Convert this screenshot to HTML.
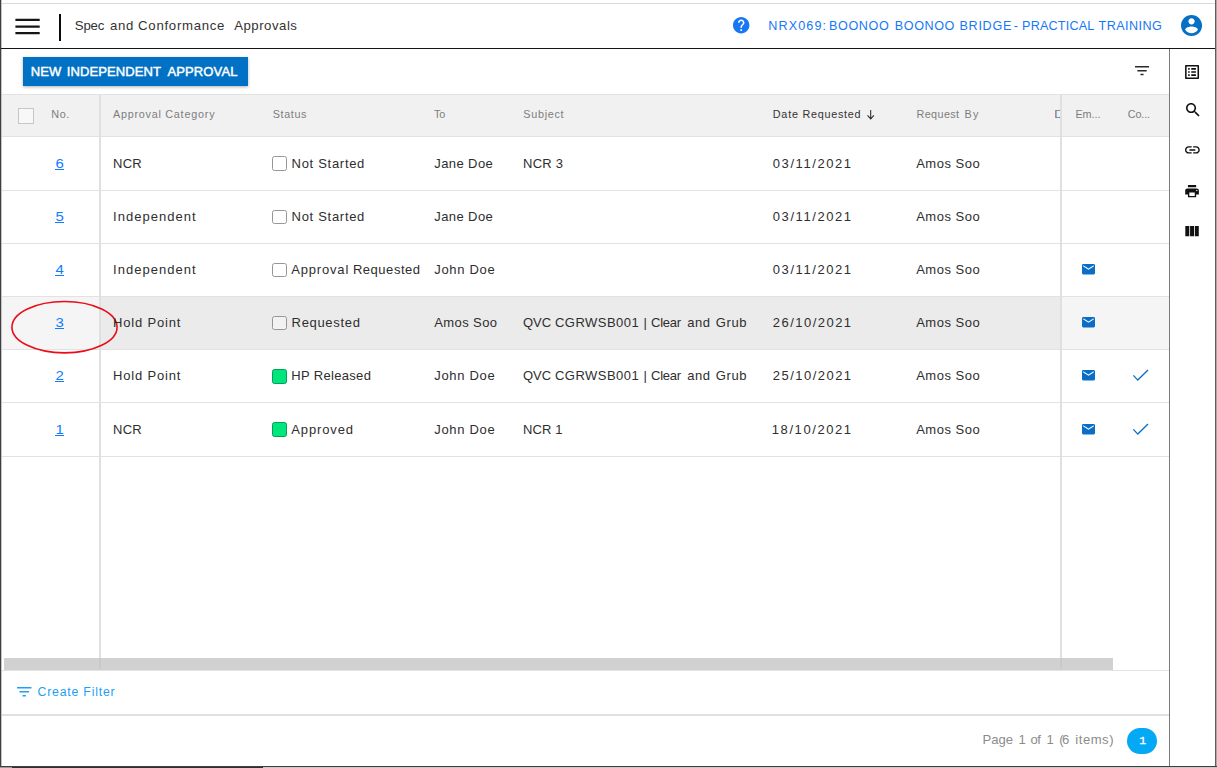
<!DOCTYPE html>
<html lang="en">
<head>
<meta charset="utf-8">
<title>Spec and Conformance - Approvals</title>
<style>
html,body{margin:0;padding:0}
body{width:1217px;height:768px;overflow:hidden;position:relative;background:#fff;font-family:"Liberation Sans",sans-serif}
.a{position:absolute}
.t{position:absolute;white-space:pre;line-height:1}
a.t{text-decoration:none}
.hl{position:absolute;height:1px;background:#e2e2e2}
.cb{position:absolute;left:272px;width:13px;height:13px;border:1px solid #969696;border-radius:2.5px;background:rgba(255,255,255,.35)}
.cb.g{background:#00e67d;border-color:#04a05a}
.ul{position:absolute;height:1px;width:9px;left:55px;background:#0f7bff}
a.t{transform:scaleX(1.15);transform-origin:50% 50%}
svg{position:absolute;overflow:visible}
</style>
</head>
<body>
<!-- window frame -->
<div class="a" style="left:0;top:0;width:1px;height:768px;background:#3f3f3f"></div>
<div class="a" style="left:1px;top:0;width:1px;height:766px;background:#c4c4c4"></div>
<div class="a" style="left:2px;top:3px;width:1213px;height:1px;background:#dadada"></div>
<div class="a" style="left:1215px;top:0;width:1px;height:767px;background:#5e5e5e"></div>
<div class="a" style="left:1216px;top:0;width:1px;height:768px;background:#a9a9a9"></div>
<div class="a" style="left:0;top:766px;width:1217px;height:1px;background:#404040"></div>
<div class="a" style="left:0;top:767px;width:12px;height:1px;background:#9a9a9a"></div>
<div class="a" style="left:12px;top:767px;width:251px;height:1px;background:#303030"></div>
<div class="a" style="left:263px;top:767px;width:954px;height:1px;background:#c9c9c9"></div>

<!-- top nav -->
<div class="a" style="left:1px;top:48px;width:1214px;height:1px;background:#151515"></div>
<svg style="left:0;top:0" width="60" height="48" viewBox="0 0 60 48"><path fill="#161616" d="M15.4 18.75h24.3v2.25H15.4zM15.4 25.5h24.3v2.25H15.4zM15.4 32.1h24.3v2.25H15.4z"/></svg>
<div class="a" style="left:59px;top:14px;width:2px;height:26.5px;background:#0a0a0a"></div>
<!-- help -->
<svg style="left:732.9px;top:17.3px" width="16.4" height="16.4" viewBox="2 2 20 20"><path fill="#1877f2" d="M12 2C6.48 2 2 6.48 2 12s4.48 10 10 10 10-4.48 10-10S17.52 2 12 2zm1 17h-2v-2h2v2zm2.07-7.75l-.9.92C13.45 12.9 13 13.5 13 15h-2v-.5c0-1.1.45-2.1 1.17-2.83l1.24-1.26c.37-.36.59-.86.59-1.41 0-1.1-.9-2-2-2s-2 .9-2 2H8c0-2.21 1.79-4 4-4s4 1.79 4 4c0 .88-.36 1.68-.93 2.25z"/></svg>
<!-- avatar -->
<svg style="left:1181px;top:14.85px" width="21.1" height="21.1" viewBox="2 2 20 20"><path fill="#0670c4" d="M12 2C6.48 2 2 6.48 2 12s4.48 10 10 10 10-4.48 10-10S17.52 2 12 2zm0 3c1.66 0 3 1.34 3 3s-1.34 3-3 3-3-1.34-3-3 1.34-3 3-3zm0 14.2c-2.5 0-4.71-1.28-6-3.22.03-1.99 4-3.08 6-3.08 1.99 0 5.97 1.09 6 3.08-1.29 1.94-3.5 3.22-6 3.22z"/></svg>

<!-- toolbar -->
<div class="a" style="left:23px;top:57px;width:225px;height:29px;background:#0071c5;box-shadow:0 1px 3px rgba(0,0,0,.3)"></div>
<svg style="left:1135.2px;top:66.2px" width="14" height="9.33" viewBox="3 6 18 12"><path fill="#2a2a2a" d="M10 18h4v-2h-4v2zM3 6v2h18V6H3zm3 7h12v-2H6v2z"/></svg>

<!-- sidebar -->
<div class="a" style="left:1169px;top:49px;width:1px;height:717px;background:#7a7a7a"></div>
<svg style="left:1185.1px;top:65px" width="14.1" height="14" viewBox="3 3 18 18"><path fill="#111" d="M19 5v14H5V5h14m1.1-2H3.9c-.5 0-.9.4-.9.9v16.2c0 .4.4.9.9.9h16.2c.4 0 .9-.5.9-.9V3.9c0-.5-.5-.9-.9-.9zM11 7h6v2h-6V7zm0 4h6v2h-6v-2zm0 4h6v2h-6zM7 7h2v2H7zm0 4h2v2H7zm0 4h2v2H7z"/></svg>
<svg style="left:1185.6px;top:103.2px" width="13.6" height="13.6" viewBox="3 3 17.49 17.49"><path fill="#111" d="M15.5 14h-.79l-.28-.27C15.41 12.59 16 11.11 16 9.5 16 5.91 13.09 3 9.5 3S3 5.91 3 9.5 5.91 16 9.5 16c1.61 0 3.09-.59 4.23-1.57l.27.28v.79l5 4.99L20.49 19l-4.99-5zm-6 0C7.01 14 5 11.99 5 9.5S7.01 5 9.5 5 14 7.01 14 9.5 11.99 14 9.5 14z"/></svg>
<svg style="left:1185px;top:145.7px" width="14.8" height="7.8" viewBox="2 7 20 10"><path fill="#111" d="M3.9 12c0-1.71 1.39-3.1 3.1-3.1h4V7H7c-2.76 0-5 2.240-5 5s2.240 5 5 5h4v-1.900H7c-1.710 0-3.100-1.390-3.100-3.100zM8 13h8v-2H8v2zm9-6h-4v1.900h4c1.710 0 3.100 1.390 3.100 3.100s-1.390 3.100-3.100 3.100h-4V17h4c2.760 0 5-2.240 5-5s-2.240-5-5-5z"/></svg>
<svg style="left:1185.3px;top:184.7px" width="14.1" height="12.3" viewBox="2 3 20 18"><path fill="#111" d="M19 8H5c-1.660 0-3 1.340-3 3v6h4v4h12v-4h4v-6c0-1.660-1.340-3-3-3zm-3 11H8v-5h8v5zm3-7c-.55 0-1-.45-1-1s.45-1 1-1 1 .45 1 1-.45 1-1 1zm-1-9H6v3.3h12V3z"/></svg>
<svg style="left:1185.3px;top:225.8px" width="14.1" height="10.3" viewBox="4 5 17 13"><path fill="#111" d="M10 18h5V5h-5v13zm-6 0h5V5H4v13zM16 5v13h5V5h-5z"/></svg>

<!-- grid header -->
<div class="a" style="left:2px;top:95px;width:1167px;height:41.5px;background:#f1f1f1"></div>
<div class="a" style="left:18px;top:108px;width:14px;height:14px;border:1px solid #c6c6c6;background:#f8f8f8"></div>
<!-- highlighted row -->
<div class="a" style="left:2px;top:296.6px;width:97px;height:52.8px;background:#f5f5f5"></div>
<div class="a" style="left:101px;top:296.6px;width:959px;height:52.8px;background:#ebebeb"></div>
<div class="a" style="left:1062px;top:296.6px;width:107px;height:52.8px;background:#f5f5f5"></div>
<!-- row lines -->
<div class="hl" style="left:2px;top:94px;width:1167px"></div>
<div class="hl" style="left:2px;top:136px;width:1167px"></div>
<div class="hl" style="left:2px;top:190px;width:1167px"></div>
<div class="hl" style="left:2px;top:243px;width:1167px"></div>
<div class="hl" style="left:2px;top:296px;width:1167px"></div>
<div class="hl" style="left:2px;top:349px;width:1167px"></div>
<div class="hl" style="left:2px;top:402px;width:1167px"></div>
<div class="hl" style="left:2px;top:456px;width:1167px"></div>
<!-- scrollbar -->
<div class="a" style="left:4px;top:658px;width:1109px;height:12px;background:#d1d1d1"></div>
<div class="hl" style="left:2px;top:670px;width:1167px;background:#e2e2e2"></div>
<div class="a" style="left:2px;top:714px;width:1167px;height:2px;background:#e0e0e0"></div>
<!-- fixed column separators -->
<div class="a" style="left:99px;top:95px;width:2px;height:563px;background:#e0e0e0"></div>
<div class="a" style="left:1060px;top:95px;width:2px;height:563px;background:#e0e0e0"></div>
<div class="a" style="left:99px;top:658px;width:2px;height:11px;background:#c9c9c9"></div>
<div class="a" style="left:1060px;top:658px;width:2px;height:11px;background:#c9c9c9"></div>

<!-- status boxes -->
<div class="cb" style="top:156px;height:13px"></div>
<div class="cb" style="top:210px;height:12px"></div>
<div class="cb" style="top:263px;height:12px"></div>
<div class="cb" style="top:316px;height:12px"></div>
<div class="cb g" style="top:369px;height:13px"></div>
<div class="cb g" style="top:422px;height:13px"></div>

<!-- link underlines -->
<div class="ul" style="top:169px"></div>
<div class="ul" style="top:222px"></div>
<div class="ul" style="top:275px"></div>
<div class="ul" style="top:328px"></div>
<div class="ul" style="top:381px"></div>
<div class="ul" style="top:435px"></div>

<!-- sort arrow -->
<svg style="left:866.9px;top:109.5px" width="7.4" height="9.6" viewBox="0 0 7.4 9" preserveAspectRatio="none"><path fill="none" stroke="#2a2a2a" stroke-width="1.05" d="M3.7 0v8.2M0.5 5l3.2 3.3L6.9 5"/></svg>
<!-- clipped D -->
<div class="a" style="left:1054.5px;top:110.3px;width:5.5px;height:8px;overflow:hidden"><span class="t" style="left:-1px;top:-1.2px;font-size:10.8px;color:#7d7d7d;transform:scaleX(1.3);transform-origin:0 0">D</span></div>

<!-- mail icons -->
<svg style="left:1082.1px;top:264.1px" width="13" height="10.4" viewBox="2 4 20 16"><path fill="#0a6ec6" d="M20 4H4c-1.100 0-1.990.9-1.990 2L2 18c0 1.100.9 2 2 2h16c1.100 0 2-.9 2-2V6c0-1.100-.9-2-2-2zm0 4l-8 5-8-5V6l8 5 8-5v2z"/></svg>
<svg style="left:1082.1px;top:317.3px" width="13" height="10.4" viewBox="2 4 20 16"><path fill="#0a6ec6" d="M20 4H4c-1.100 0-1.990.9-1.990 2L2 18c0 1.100.9 2 2 2h16c1.100 0 2-.9 2-2V6c0-1.100-.9-2-2-2zm0 4l-8 5-8-5V6l8 5 8-5v2z"/></svg>
<svg style="left:1082.1px;top:370.3px" width="13" height="10.4" viewBox="2 4 20 16"><path fill="#0a6ec6" d="M20 4H4c-1.100 0-1.990.9-1.990 2L2 18c0 1.100.9 2 2 2h16c1.100 0 2-.9 2-2V6c0-1.100-.9-2-2-2zm0 4l-8 5-8-5V6l8 5 8-5v2z"/></svg>
<svg style="left:1082.1px;top:424.1px" width="13" height="10.4" viewBox="2 4 20 16"><path fill="#0a6ec6" d="M20 4H4c-1.100 0-1.990.9-1.990 2L2 18c0 1.100.9 2 2 2h16c1.100 0 2-.9 2-2V6c0-1.100-.9-2-2-2zm0 4l-8 5-8-5V6l8 5 8-5v2z"/></svg>
<!-- check icons -->
<svg style="left:1132px;top:368px" width="18" height="14" viewBox="1132 368 18 14"><path fill="none" stroke="#0a6ec6" stroke-width="1.35" d="M1133.4 375.4l4.4 4.7L1148 369.9"/></svg>
<svg style="left:1132px;top:421.6px" width="18" height="14" viewBox="1132 368 18 14"><path fill="none" stroke="#0a6ec6" stroke-width="1.35" d="M1133.4 375.4l4.4 4.7L1148 369.9"/></svg>

<!-- red annotation ellipse -->
<svg style="left:0;top:290px" width="130" height="75" viewBox="0 290 130 75"><ellipse cx="64.5" cy="327.15" rx="52.55" ry="25.7" fill="none" stroke="#ea0c18" stroke-width="1.6"/></svg>

<!-- footer -->
<svg style="left:17.1px;top:687.1px" width="14.5" height="9.6" viewBox="3 6 18 12"><path fill="#1e9ff2" d="M10 18h4v-2h-4v2zM3 6v2h18V6H3zm3 7h12v-2H6v2z"/></svg>
<div class="a" style="left:1127px;top:728px;width:30px;height:26px;border-radius:13px;background:#03a9f4"></div>

<span class="t" style="left:74.80px;top:19.00px;font-size:13.2px;color:#333;letter-spacing:-0.200px;">Spec </span>
<span class="t" style="left:109.90px;top:19.00px;font-size:13.2px;color:#333;letter-spacing:0.700px;">and </span>
<span class="t" style="left:138.10px;top:19.00px;font-size:13.2px;color:#333;letter-spacing:0.720px;">Conformance</span>
<span class="t" style="left:234.20px;top:19.00px;font-size:13.2px;color:#333;letter-spacing:0.513px;">Approvals</span>
<span class="t" style="left:768.30px;top:20.00px;font-size:12.6px;color:#1479f5;letter-spacing:1.117px;">NRX069: </span>
<span class="t" style="left:829.10px;top:20.00px;font-size:12.6px;color:#1479f5;letter-spacing:0.580px;">BOONOO </span>
<span class="t" style="left:894.80px;top:20.00px;font-size:12.6px;color:#1479f5;letter-spacing:0.580px;">BOONOO </span>
<span class="t" style="left:959.50px;top:20.00px;font-size:12.6px;color:#1479f5;letter-spacing:0.700px;">BRIDGE </span>
<span class="t" style="left:1013.70px;top:20.00px;font-size:12.6px;color:#1479f5;">- </span>
<span class="t" style="left:1022.10px;top:20.00px;font-size:12.6px;color:#1479f5;letter-spacing:0.187px;">PRACTICAL </span>
<span class="t" style="left:1098.60px;top:20.00px;font-size:12.6px;color:#1479f5;letter-spacing:0.443px;">TRAINING</span>
<span class="t" style="left:30.80px;top:65.00px;font-size:13px;color:#fff;letter-spacing:0.100px;-webkit-text-stroke:0.45px #fff;">NEW </span>
<span class="t" style="left:66.70px;top:65.00px;font-size:13px;color:#fff;letter-spacing:0.110px;-webkit-text-stroke:0.45px #fff;">INDEPENDENT </span>
<span class="t" style="left:167.50px;top:65.00px;font-size:13px;color:#fff;letter-spacing:0.114px;-webkit-text-stroke:0.45px #fff;">APPROVAL</span>
<span class="t" style="left:51.30px;top:109.00px;font-size:10.8px;color:#7d7d7d;letter-spacing:0.550px;">No.</span>
<span class="t" style="left:113.10px;top:109.00px;font-size:10.8px;color:#7d7d7d;letter-spacing:0.743px;">Approval </span>
<span class="t" style="left:165.20px;top:109.00px;font-size:10.8px;color:#7d7d7d;letter-spacing:0.800px;">Category</span>
<span class="t" style="left:272.70px;top:109.00px;font-size:10.8px;color:#7d7d7d;letter-spacing:0.640px;">Status</span>
<span class="t" style="left:433.90px;top:109.00px;font-size:10.8px;color:#7d7d7d;letter-spacing:-0.100px;">To</span>
<span class="t" style="left:523.30px;top:109.00px;font-size:10.8px;color:#7d7d7d;letter-spacing:0.717px;">Subject</span>
<span class="t" style="left:772.80px;top:109.00px;font-size:10.8px;color:#333;letter-spacing:0.767px;">Date </span>
<span class="t" style="left:802.60px;top:109.00px;font-size:10.8px;color:#333;letter-spacing:0.712px;">Requested</span>
<span class="t" style="left:916.50px;top:109.00px;font-size:10.8px;color:#7d7d7d;letter-spacing:0.400px;">Request </span>
<span class="t" style="left:964.40px;top:109.00px;font-size:10.8px;color:#7d7d7d;letter-spacing:1.400px;">By</span>
<span class="t" style="left:1075.40px;top:109.00px;font-size:10.8px;color:#7d7d7d;letter-spacing:-0.050px;">Em...</span>
<span class="t" style="left:1127.80px;top:109.00px;font-size:10.8px;color:#7d7d7d;letter-spacing:-0.150px;">Co...</span>
<a class="t" style="left:55.50px;top:157.00px;font-size:13px;color:#0f7bff;">6</a>
<span class="t" style="left:113.10px;top:157.00px;font-size:13px;color:#2e2e2e;letter-spacing:0.150px;">NCR</span>
<span class="t" style="left:291.60px;top:157.00px;font-size:13px;color:#2e2e2e;letter-spacing:0.700px;">Not Started</span>
<span class="t" style="left:434.30px;top:157.00px;font-size:13px;color:#2e2e2e;letter-spacing:0.400px;">Jane Doe</span>
<span class="t" style="left:523.00px;top:157.00px;font-size:13px;color:#2e2e2e;letter-spacing:0.250px;">NCR 3</span>
<span class="t" style="left:772.80px;top:157.00px;font-size:13px;color:#2e2e2e;letter-spacing:1.578px;">03/11/2021</span>
<span class="t" style="left:916.20px;top:157.00px;font-size:13px;color:#2e2e2e;letter-spacing:0.514px;">Amos Soo</span>
<a class="t" style="left:55.50px;top:210.00px;font-size:13px;color:#0f7bff;">5</a>
<span class="t" style="left:113.10px;top:210.00px;font-size:13px;color:#2e2e2e;letter-spacing:1.020px;">Independent</span>
<span class="t" style="left:291.60px;top:210.00px;font-size:13px;color:#2e2e2e;letter-spacing:0.700px;">Not Started</span>
<span class="t" style="left:434.30px;top:210.00px;font-size:13px;color:#2e2e2e;letter-spacing:0.400px;">Jane Doe</span>
<span class="t" style="left:772.80px;top:210.00px;font-size:13px;color:#2e2e2e;letter-spacing:1.578px;">03/11/2021</span>
<span class="t" style="left:916.20px;top:210.00px;font-size:13px;color:#2e2e2e;letter-spacing:0.514px;">Amos Soo</span>
<a class="t" style="left:55.50px;top:263.00px;font-size:13px;color:#0f7bff;">4</a>
<span class="t" style="left:113.10px;top:263.00px;font-size:13px;color:#2e2e2e;letter-spacing:1.020px;">Independent</span>
<span class="t" style="left:291.30px;top:263.00px;font-size:13px;color:#2e2e2e;letter-spacing:0.814px;">Approval </span>
<span class="t" style="left:352.90px;top:263.00px;font-size:13px;color:#2e2e2e;letter-spacing:0.538px;">Requested</span>
<span class="t" style="left:434.30px;top:263.00px;font-size:13px;color:#2e2e2e;letter-spacing:0.671px;">John Doe</span>
<span class="t" style="left:772.80px;top:263.00px;font-size:13px;color:#2e2e2e;letter-spacing:1.578px;">03/11/2021</span>
<span class="t" style="left:916.20px;top:263.00px;font-size:13px;color:#2e2e2e;letter-spacing:0.514px;">Amos Soo</span>
<a class="t" style="left:55.50px;top:316.00px;font-size:13px;color:#0f7bff;">3</a>
<span class="t" style="left:113.10px;top:316.00px;font-size:13px;color:#2e2e2e;letter-spacing:0.822px;">Hold Point</span>
<span class="t" style="left:291.60px;top:316.00px;font-size:13px;color:#2e2e2e;letter-spacing:0.675px;">Requested</span>
<span class="t" style="left:434.30px;top:316.00px;font-size:13px;color:#2e2e2e;letter-spacing:0.386px;">Amos Soo</span>
<span class="t" style="left:522.90px;top:316.00px;font-size:13px;color:#2e2e2e;letter-spacing:0.100px;">QVC </span>
<span class="t" style="left:555.00px;top:316.00px;font-size:13px;color:#2e2e2e;letter-spacing:0.475px;">CGRWSB001 </span>
<span class="t" style="left:643.60px;top:316.00px;font-size:13px;color:#2e2e2e;">| </span>
<span class="t" style="left:651.10px;top:316.00px;font-size:13px;color:#2e2e2e;letter-spacing:-0.275px;">Clear </span>
<span class="t" style="left:687.20px;top:316.00px;font-size:13px;color:#2e2e2e;letter-spacing:0.500px;">and </span>
<span class="t" style="left:715.70px;top:316.00px;font-size:13px;color:#2e2e2e;letter-spacing:0.667px;">Grub</span>
<span class="t" style="left:772.80px;top:316.00px;font-size:13px;color:#2e2e2e;letter-spacing:1.467px;">26/10/2021</span>
<span class="t" style="left:916.20px;top:316.00px;font-size:13px;color:#2e2e2e;letter-spacing:0.514px;">Amos Soo</span>
<a class="t" style="left:55.50px;top:369.00px;font-size:13px;color:#0f7bff;">2</a>
<span class="t" style="left:113.10px;top:369.00px;font-size:13px;color:#2e2e2e;letter-spacing:0.822px;">Hold Point</span>
<span class="t" style="left:291.30px;top:369.00px;font-size:13px;color:#2e2e2e;letter-spacing:0.320px;">HP Released</span>
<span class="t" style="left:434.30px;top:369.00px;font-size:13px;color:#2e2e2e;letter-spacing:0.671px;">John Doe</span>
<span class="t" style="left:522.90px;top:369.00px;font-size:13px;color:#2e2e2e;letter-spacing:0.100px;">QVC </span>
<span class="t" style="left:555.00px;top:369.00px;font-size:13px;color:#2e2e2e;letter-spacing:0.475px;">CGRWSB001 </span>
<span class="t" style="left:643.60px;top:369.00px;font-size:13px;color:#2e2e2e;">| </span>
<span class="t" style="left:651.10px;top:369.00px;font-size:13px;color:#2e2e2e;letter-spacing:-0.275px;">Clear </span>
<span class="t" style="left:687.20px;top:369.00px;font-size:13px;color:#2e2e2e;letter-spacing:0.500px;">and </span>
<span class="t" style="left:715.70px;top:369.00px;font-size:13px;color:#2e2e2e;letter-spacing:0.667px;">Grub</span>
<span class="t" style="left:772.80px;top:369.00px;font-size:13px;color:#2e2e2e;letter-spacing:1.467px;">25/10/2021</span>
<span class="t" style="left:916.20px;top:369.00px;font-size:13px;color:#2e2e2e;letter-spacing:0.514px;">Amos Soo</span>
<a class="t" style="left:55.50px;top:423.00px;font-size:13px;color:#0f7bff;">1</a>
<span class="t" style="left:113.10px;top:423.00px;font-size:13px;color:#2e2e2e;letter-spacing:0.150px;">NCR</span>
<span class="t" style="left:291.30px;top:423.00px;font-size:13px;color:#2e2e2e;letter-spacing:0.857px;">Approved</span>
<span class="t" style="left:434.30px;top:423.00px;font-size:13px;color:#2e2e2e;letter-spacing:0.671px;">John Doe</span>
<span class="t" style="left:523.00px;top:423.00px;font-size:13px;color:#2e2e2e;letter-spacing:0.125px;">NCR 1</span>
<span class="t" style="left:771.80px;top:423.00px;font-size:13px;color:#2e2e2e;letter-spacing:1.578px;">18/10/2021</span>
<span class="t" style="left:916.20px;top:423.00px;font-size:13px;color:#2e2e2e;letter-spacing:0.514px;">Amos Soo</span>
<span class="t" style="left:37.50px;top:686.00px;font-size:12.3px;color:#1e9ff2;letter-spacing:0.792px;">Create Filter</span>
<span class="t" style="left:982.40px;top:733.00px;font-size:13.1px;color:#8c8c8c;letter-spacing:0.033px;">Page </span>
<span class="t" style="left:1018.50px;top:733.00px;font-size:13.1px;color:#8c8c8c;">1 </span>
<span class="t" style="left:1030.40px;top:733.00px;font-size:13.1px;color:#8c8c8c;letter-spacing:-0.400px;">of </span>
<span class="t" style="left:1046.50px;top:733.00px;font-size:13.1px;color:#8c8c8c;">1 </span>
<span class="t" style="left:1059.20px;top:733.00px;font-size:13.1px;color:#8c8c8c;letter-spacing:-1.600px;">(6 </span>
<span class="t" style="left:1075.30px;top:733.00px;font-size:13.1px;color:#8c8c8c;letter-spacing:0.520px;">items)</span>
<span class="t" style="left:1139.30px;top:735.00px;font-size:11.5px;color:#fff;font-family:'Liberation Mono',monospace;-webkit-text-stroke:0.3px #fff;">1</span>
</body>
</html>
